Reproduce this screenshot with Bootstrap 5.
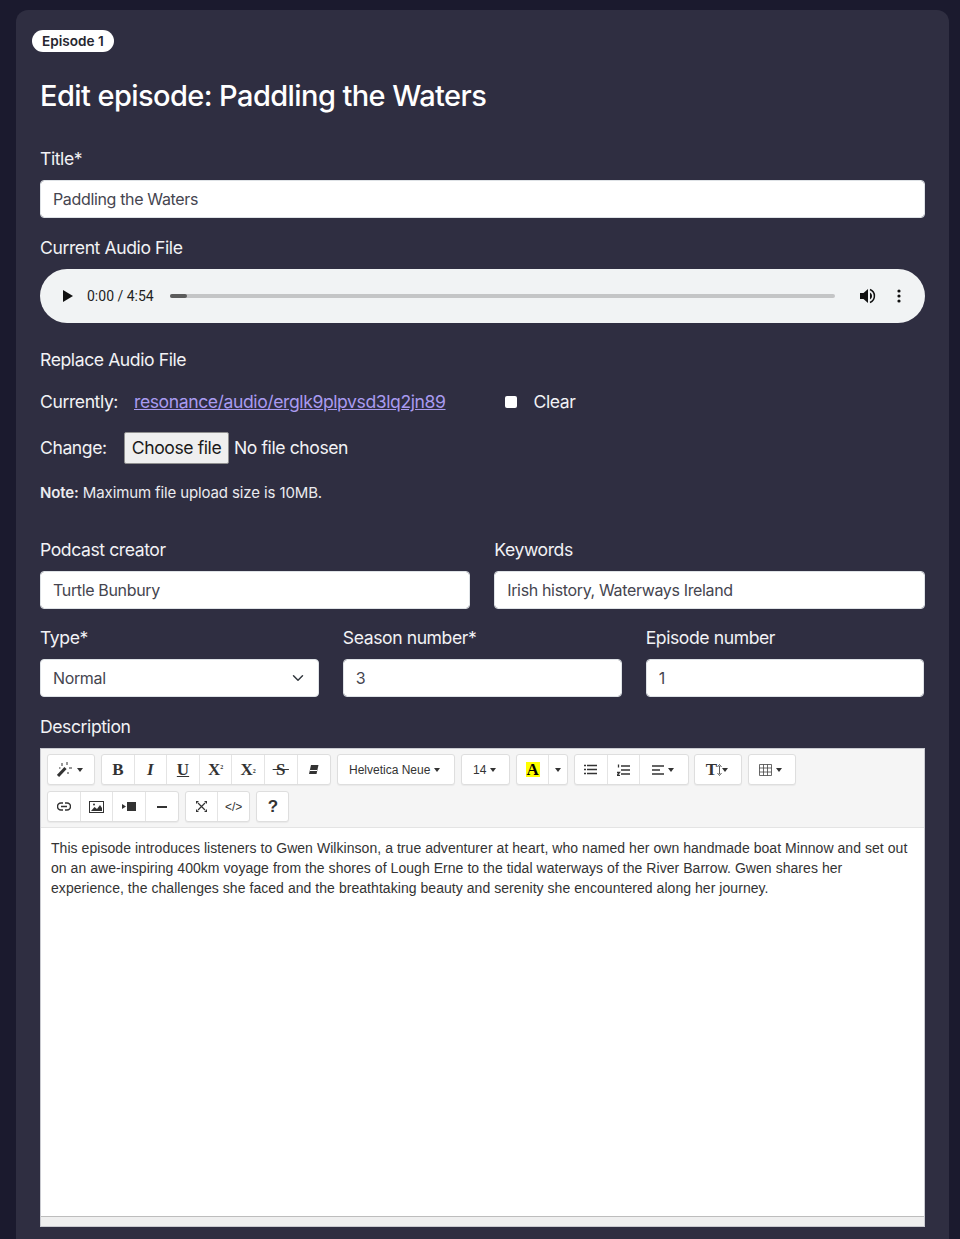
<!DOCTYPE html>
<html lang="en">
<head>
    <meta charset="UTF-8">
    <meta name="viewport" content="width=device-width, initial-scale=1.0">
    <title>Edit episode</title>
    <link href="https://cdn.jsdelivr.net/npm/bootstrap@5.3.3/dist/css/bootstrap.min.css" rel="stylesheet">
    <style>
        html, body{
            height: 1239px;
            overflow: hidden;
        }
        body{
            font-family: Inter, "Liberation Sans", sans-serif;
            background: #1b1a2e;
            color: #f2f2f5;
            font-size: 17.6px;
            letter-spacing: -0.42px;
        }
        .page_card{
            margin: 10px 11px 0 16px;
            min-height: 1300px;
            background: #2f2e41;
            border-radius: 12px;
            padding: 20px 16.5px 20px 16px;
        }
        .ep_badge{
            display: block;
            width: fit-content;
            background: #fff;
            color: #26262f;
            font-size: 13.6px;
            font-weight: 600;
            letter-spacing: 0;
            line-height: 22px;
            padding: 0 10px;
            border-radius: 11px;
        }
        .page_title{
            font-size: 29px;
            font-weight: 500;
            line-height: 35px;
            letter-spacing: -0.58px;
            margin: 26px 0 33px;
            color: #fff;
        }
        .field_label{
            display: block;
            margin-bottom: 8px;
            line-height: 26px;
        }
        .form-control, .form-select{
            height: 38px;
            font-size: 16px;
            letter-spacing: -0.35px;
            color: #45454f;
            border-radius: 4px;
            padding: 6px 12px;
        }
        .audio_field{
            margin-top: 17px;
        }
        .fake_audio{
            height: 54px;
            background: #f1f3f4;
            border-radius: 27px;
            color: #1f1f1f;
            padding: 0 20px 0 22px;
            font-family: Roboto, sans-serif;
            font-size: 14px;
            letter-spacing: 0;
        }
        .audio_time{
            margin-left: 13px;
        }
        .audio_track{
            height: 4px;
            background: #c4c5c6;
            border-radius: 2px;
            margin: 0 24px 0 16px;
        }
        .audio_done{
            height: 4px;
            width: 17px;
            background: #5c5c5c;
            border-radius: 2px;
        }
        .audio_menu{
            margin-left: 20px;
        }
        .file_row{
            height: 46px;
        }
        .first_file_row{
            height: 45px;
            margin-top: 7px;
        }
        .file_row a{
            color: #a99bf0;
        }
        .row_name{
            width: 94px;
        }
        .form-check-input.clear_box[type=checkbox]{
            width: 12px;
            height: 12px;
            margin: 0 17px 0 0;
            border-radius: 2px;
            border: 0;
            background-color: #fff;
        }
        .clear_wrap{
            margin-left: 59px;
        }
        .row_label{
            width: 84px;
        }
        .file_btn{
            height: 32px;
            width: 105px;
            padding: 0;
            margin-right: 5px;
            background: #efefef;
            border: 1px solid #8f8f8f;
            border-radius: 2px;
            color: #1a1a1a;
            font-size: 17.6px;
            letter-spacing: -0.42px;
        }
        .note_line{
            font-size: 15px;
            letter-spacing: -0.12px;
            line-height: 22px;
            margin: 11px 0 33px;
            color: #ebebef;
        }
        .note_line b{
            font-weight: 600;
        }
        .editor_label{
            margin-top: 17px;
            margin-bottom: 8px;
        }
        .editor_box{
            height: 479px;
            background: #fff;
            border: 1px solid #c9cad0;
            color: #333;
            letter-spacing: 0;
        }
        .editor_tools{
            height: 79px;
            background: #f5f5f5;
            border-bottom: 1px solid #e4e4e4;
            padding: 5px 0 0 6px;
        }
        .tool_row{
            height: 31px;
            margin-bottom: 6px;
        }
        .tool_group{
            margin-right: 6px;
            background: #fff;
            border: 1px solid #dedede;
            border-radius: 3px;
            box-shadow: 0 1px 1px rgba(0,0,0,.05);
        }
        .tool_group_tight{
            margin-right: 5px;
        }
        .tool_btn{
            height: 29px;
            width: 32.6px;
            border-right: 1px solid #e4e4e4;
            font-family: "Liberation Sans", sans-serif;
            font-size: 12px;
            color: #333;
        }
        .tool_btn:last-child{
            border-right: 0;
        }
        .tool_wide{
            width: 46px;
            padding-right: 3px;
        }
        .tool_size{
            width: 47px;
            padding-right: 2px;
        }
        .tool_align{
            width: 48px;
            padding-right: 3px;
        }
        .tool_font{
            width: 116px;
            padding-right: 3px;
        }
        .tool_caret{
            width: 18px;
        }
        .tool_color{
            width: 32px;
        }
        .tool_small{
            width: 31.5px;
        }
        .tool_help{
            width: 31px;
            font-size: 17px;
        }
        .tool_serif{
            font-family: "Liberation Serif", serif;
            font-weight: 700;
            font-size: 17px;
        }
        .tool_serif sup, .tool_serif sub{
            font-size: 6px;
        }
        .caret_mark{
            width: 0;
            height: 0;
            margin-left: 4px;
            border-left: 3px solid transparent;
            border-right: 3px solid transparent;
            border-top: 4px solid #333;
        }
        .hilite_a{
            background: #ff0;
            color: #000;
            font-size: 17px;
            line-height: 15px;
            padding: 0 1px;
        }
        .editor_text{
            height: 388px;
            padding: 10px;
            font-family: "Liberation Sans", sans-serif;
            font-size: 14px;
            letter-spacing: 0.05px;
            line-height: 20px;
        }
        .editor_status{
            height: 10px;
            background: #efefef;
            border-top: 1px solid #bdbdbd;
        }
    </style>
</head>
<body>
    <div class="page_card">
        <span class="ep_badge">Episode 1</span>
        <div class="px-2">
            <h1 class="page_title">Edit episode: Paddling the Waters</h1>

            <div class="mb-3">
                <label class="field_label" for="title">Title*</label>
                <input type="text" class="form-control" id="title" value="Paddling the Waters">
            </div>

            <div class="audio_field mb-3">
                <label class="field_label">Current Audio File</label>
                <div class="fake_audio d-flex align-items-center">
                    <svg width="12" height="12" viewBox="0 0 12 12"><path d="M1 0l10 6-10 6z" fill="#111"/></svg>
                    <span class="audio_time text-nowrap">0:00 / 4:54</span>
                    <div class="audio_track flex-grow-1"><div class="audio_done"></div></div>
                    <svg width="18" height="18" viewBox="0 0 18 18"><path d="M1 6v6h3.500l4.500 4V2L4.500 6z" fill="#111"/><path d="M11 5.500a4 4 0 0 1 0 7z" fill="#111"/><path d="M11 2.500a7 7 0 0 1 0 13" fill="none" stroke="#111" stroke-width="1.500"/></svg>
                    <svg class="audio_menu me-1" width="4" height="14" viewBox="0 0 4 14"><circle cx="2" cy="2" r="1.600" fill="#111"/><circle cx="2" cy="7" r="1.600" fill="#111"/><circle cx="2" cy="12" r="1.600" fill="#111"/></svg>
                </div>
            </div>

            <label class="field_label mt-4 mb-0">Replace Audio File</label>
            <div class="file_row first_file_row d-flex align-items-center">
                <span class="row_name">Currently:</span>
                <a href="#">resonance/audio/erglk9plpvsd3lq2jn89</a>
                <span class="clear_wrap d-flex align-items-center">
                    <input type="checkbox" class="form-check-input clear_box" id="clear">
                    <label for="clear">Clear</label>
                </span>
            </div>
            <div class="file_row d-flex align-items-center">
                <span class="row_label">Change:</span>
                <button type="button" class="file_btn">Choose file</button>
                <span>No file chosen</span>
            </div>
            <p class="note_line"><b>Note:</b> Maximum file upload size is 10MB.</p>

            <div class="row gx-4">
                <div class="col-6 mb-3">
                    <label class="field_label" for="creator">Podcast creator</label>
                    <input type="text" class="form-control" id="creator" value="Turtle Bunbury">
                </div>
                <div class="col-6 mb-3">
                    <label class="field_label" for="keywords">Keywords</label>
                    <input type="text" class="form-control" id="keywords" value="Irish history, Waterways Ireland">
                </div>
            </div>

            <div class="row gx-4">
                <div class="col-4">
                    <label class="field_label" for="type">Type*</label>
                    <select class="form-select" id="type"><option>Normal</option></select>
                </div>
                <div class="col-4">
                    <label class="field_label" for="season">Season number*</label>
                    <input type="text" class="form-control" id="season" value="3">
                </div>
                <div class="col-4">
                    <label class="field_label" for="episode">Episode number</label>
                    <input type="text" class="form-control" id="episode" value="1">
                </div>
            </div>

            <label class="field_label editor_label">Description</label>
            <div class="editor_box">
                <div class="editor_tools">
                    <div class="tool_row d-flex">
                        <div class="tool_group d-flex">
                            <div class="tool_btn tool_wide d-flex align-items-center justify-content-center">
                                <svg width="16" height="15" viewBox="0 0 16 15"><path d="M1 14l7.500-8" stroke="#333" stroke-width="3"/><path d="M5 1v3M10 0v3M12 6h3M2 6h1.500M11 10v2" stroke="#333" stroke-width="1"/></svg>
                                <span class="caret_mark"></span>
                            </div>
                        </div>
                        <div class="tool_group d-flex">
                            <div class="tool_btn tool_serif d-flex align-items-center justify-content-center">B</div>
                            <div class="tool_btn tool_serif fst-italic d-flex align-items-center justify-content-center">I</div>
                            <div class="tool_btn tool_serif d-flex align-items-center justify-content-center"><span class="text-decoration-underline">U</span></div>
                            <div class="tool_btn tool_serif d-flex align-items-center justify-content-center">X<sup>2</sup></div>
                            <div class="tool_btn tool_serif d-flex align-items-center justify-content-center">X<sub>2</sub></div>
                            <div class="tool_btn tool_serif d-flex align-items-center justify-content-center"><span class="text-decoration-line-through">&#8201;S&#8201;</span></div>
                            <div class="tool_btn d-flex align-items-center justify-content-center">
                                <svg width="11" height="11" viewBox="0 0 11 11"><path d="M3 1h7.500l-2 9H1z" fill="#333"/><path d="M2 6.500h7" stroke="#fff"/></svg>
                            </div>
                        </div>
                        <div class="tool_group d-flex">
                            <div class="tool_btn tool_font d-flex align-items-center justify-content-center">Helvetica Neue<span class="caret_mark"></span></div>
                        </div>
                        <div class="tool_group d-flex">
                            <div class="tool_btn tool_size d-flex align-items-center justify-content-center">14<span class="caret_mark"></span></div>
                        </div>
                        <div class="tool_group d-flex">
                            <div class="tool_btn tool_color tool_serif d-flex align-items-center justify-content-center"><span class="hilite_a">A</span></div>
                            <div class="tool_btn tool_caret d-flex align-items-center justify-content-center"><span class="caret_mark ms-0"></span></div>
                        </div>
                        <div class="tool_group tool_group_tight d-flex">
                            <div class="tool_btn d-flex align-items-center justify-content-center">
                                <svg width="13" height="11" viewBox="0 0 13 11"><path d="M3 1.500h10M3 5.500h10M3 9.500h10M0 1.500h2M0 5.500h2M0 9.500h2" stroke="#333" stroke-width="1.500"/></svg>
                            </div>
                            <div class="tool_btn d-flex align-items-center justify-content-center">
                                <svg width="13" height="12" viewBox="0 0 13 12"><path d="M4 2h9M4 6h9M4 10h9M1.500 .5v3M0 8.500h2.500l-2.500 3h3" stroke="#333" stroke-width="1.300" fill="none"/></svg>
                            </div>
                            <div class="tool_btn tool_align d-flex align-items-center justify-content-center">
                                <svg width="12" height="10" viewBox="0 0 12 10"><path d="M0 1h12M0 5h8M0 9h12" stroke="#333" stroke-width="1.500"/></svg>
                                <span class="caret_mark"></span>
                            </div>
                        </div>
                        <div class="tool_group d-flex">
                            <div class="tool_btn tool_wide d-flex align-items-center justify-content-center">
                                <span class="tool_serif">T</span>
                                <svg width="5" height="12" viewBox="0 0 5 12"><path d="M2.500 2v8M.5 3l2-2.500 2 2.500M.5 9l2 2.500 2-2.500" stroke="#333" fill="none" stroke-width=".8"/></svg>
                                <span class="caret_mark ms-0"></span>
                            </div>
                        </div>
                        <div class="tool_group d-flex">
                            <div class="tool_btn tool_wide d-flex align-items-center justify-content-center">
                                <svg width="13" height="12" viewBox="0 0 13 12"><path d="M.5.5h12v11H.5zM.5 4h12M.5 8h12M4.500.5v11M8.500.5v11" stroke="#444" stroke-width=".8" fill="none"/></svg>
                                <span class="caret_mark"></span>
                            </div>
                        </div>
                    </div>
                    <div class="tool_row d-flex">
                        <div class="tool_group d-flex">
                            <div class="tool_btn d-flex align-items-center justify-content-center">
                                <svg width="14" height="9" viewBox="0 0 14 9"><path d="M6 1H4a3.500 3.500 0 0 0 0 7h2M8 1h2a3.500 3.500 0 0 1 0 7H8M4 4.500h6" fill="none" stroke="#333" stroke-width="1.500"/></svg>
                            </div>
                            <div class="tool_btn d-flex align-items-center justify-content-center">
                                <svg width="15" height="12" viewBox="0 0 15 12"><rect x=".5" y=".5" width="14" height="11" fill="none" stroke="#333"/><path d="M2 10l3.500-4 2.500 2 3-4 2 3v3z" fill="#333"/><circle cx="5" cy="3.500" r="1" fill="#333"/></svg>
                            </div>
                            <div class="tool_btn d-flex align-items-center justify-content-center">
                                <svg width="14" height="9" viewBox="0 0 14 9"><rect x="5" y="0" width="9" height="9" fill="#333"/><path d="M0 2l4 2.500L0 7z" fill="#333"/></svg>
                            </div>
                            <div class="tool_btn d-flex align-items-center justify-content-center">
                                <svg width="10" height="2" viewBox="0 0 10 2"><path d="M0 0h10v2H0z" fill="#333"/></svg>
                            </div>
                        </div>
                        <div class="tool_group d-flex">
                            <div class="tool_btn tool_small d-flex align-items-center justify-content-center">
                                <svg width="11" height="11" viewBox="0 0 11 11"><path d="M2 2l7 7M9 2l-7 7" stroke="#333" stroke-width="1.200"/><path d="M0 0h3L0 3zM11 0v3L8 0zM0 11V8l3 3zM11 11H8l3-3z" fill="#333"/></svg>
                            </div>
                            <div class="tool_btn tool_small d-flex align-items-center justify-content-center">&lt;/&gt;</div>
                        </div>
                        <div class="tool_group d-flex">
                            <div class="tool_btn tool_help d-flex align-items-center justify-content-center fw-bold">?</div>
                        </div>
                    </div>
                </div>
                <div class="editor_text">This episode introduces listeners to Gwen Wilkinson, a true adventurer at heart, who named her own handmade boat Minnow and set out on an awe-inspiring 400km voyage from the shores of Lough Erne to the tidal waterways of the River Barrow. Gwen shares her experience, the challenges she faced and the breathtaking beauty and serenity she encountered along her journey.</div>
                <div class="editor_status"></div>
            </div>
        </div>
    </div>
    <script src="https://cdn.jsdelivr.net/npm/bootstrap@5.3.3/dist/js/bootstrap.bundle.min.js"></script>
</body>
</html>
